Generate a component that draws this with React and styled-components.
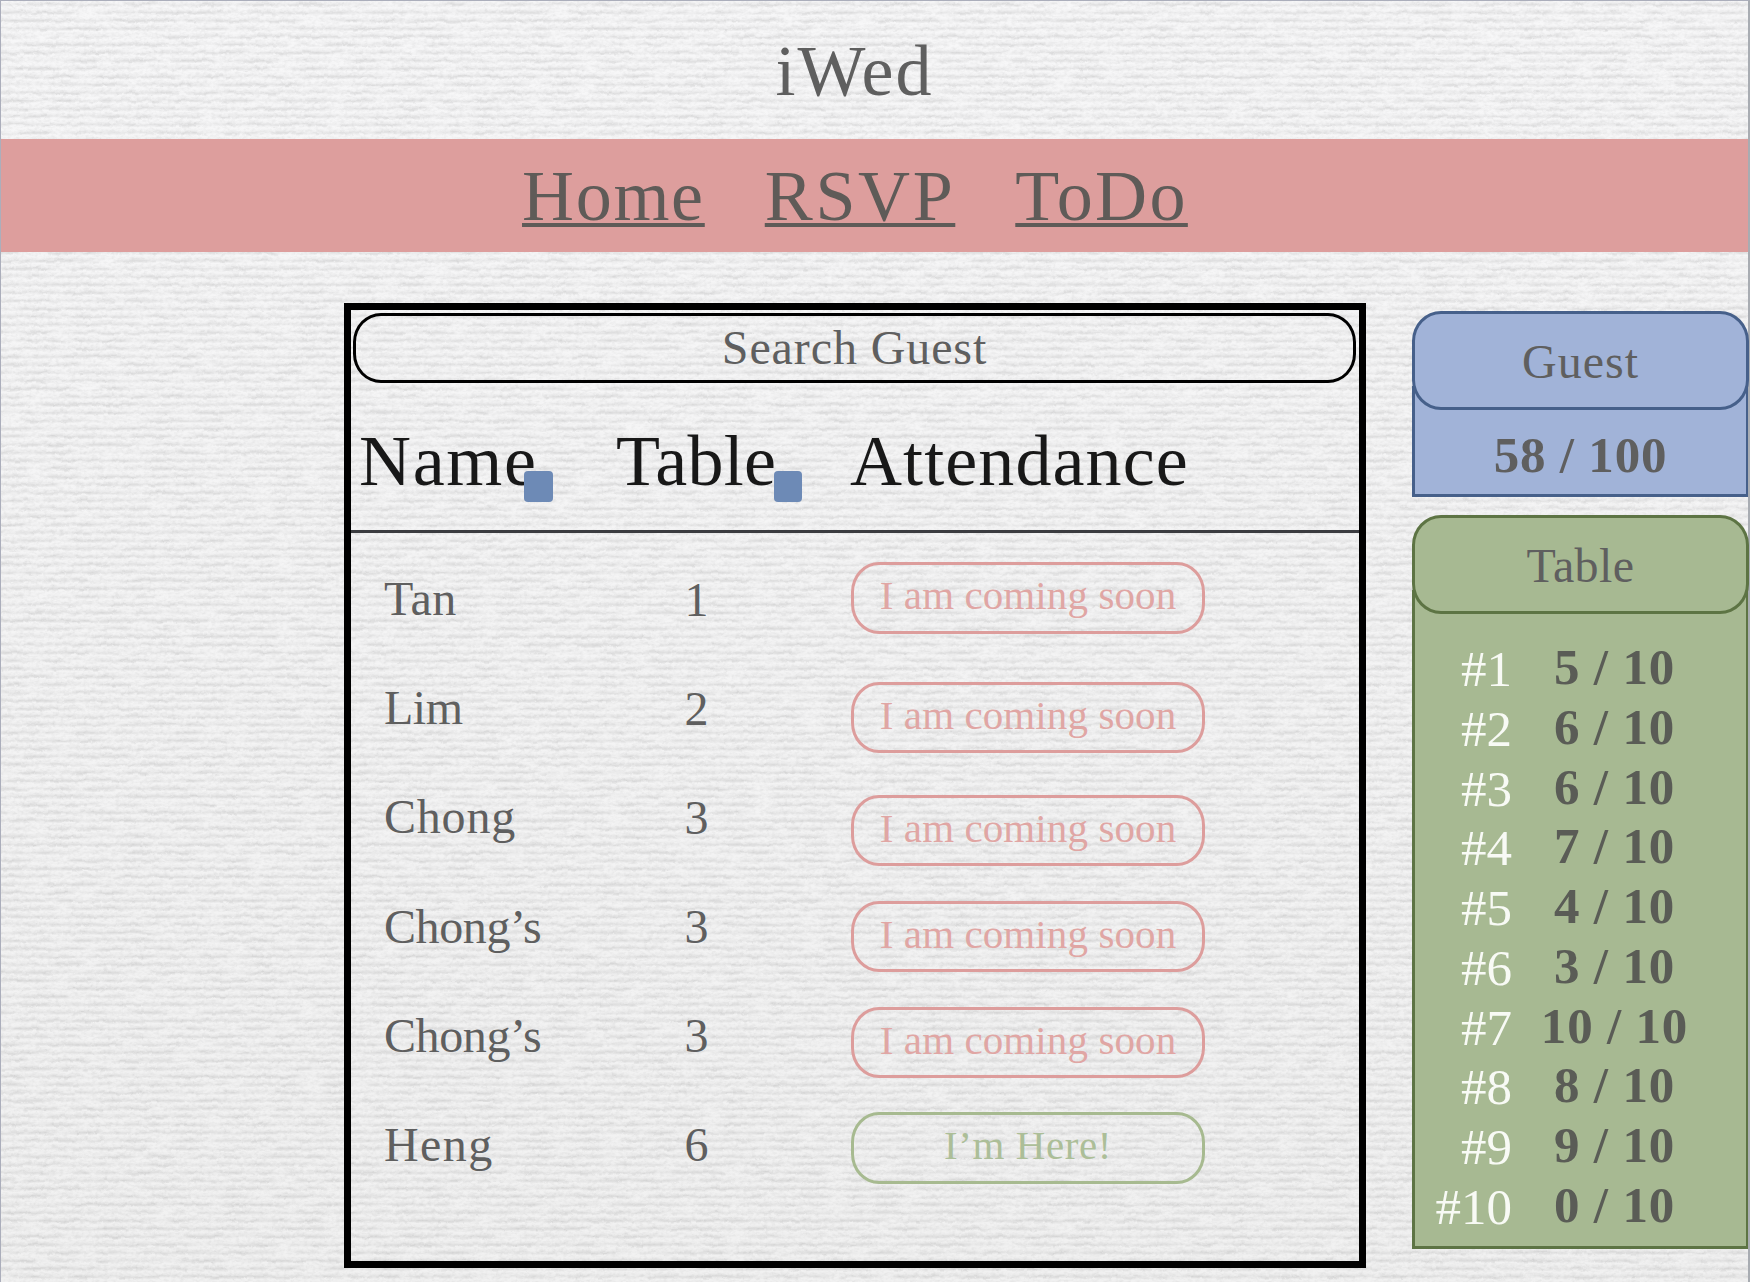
import React from "react";
import styled, { createGlobalStyle } from "styled-components";

const GlobalStyle = createGlobalStyle`
  *, *::before, *::after { box-sizing: border-box; }
  body { margin: 0; background: #f1f1f1; overflow: hidden; }
`;

const Page = styled.div`
  position: relative;
  width: 1750px;
  height: 1282px;
  overflow: hidden;
  font-family: "Liberation Serif", "Times New Roman", serif;
  color: #5f5f5f;
  background: linear-gradient(#f7f7f8, #f1f1f1);
`;

const PaperLayer = styled.svg`
  position: absolute;
  inset: 0;
  width: 100%;
  height: 100%;
`;

const WindowEdge = styled.div`
  position: absolute;
  inset: 0;
  border: 1px solid #abaebb;
  border-right: 2px solid #a8acb2;
  border-bottom: 0;
  pointer-events: none;
`;

const Content = styled.div`
  position: relative;
  display: flex;
  flex-direction: column;
`;

const Text = styled.span`
  display: block;
  white-space: nowrap;
  font-size: ${(p) => p.$size || 48}px;
  line-height: ${(p) => p.$line || p.$size || 48}px;
  letter-spacing: ${(p) => p.$track || 0}px;
  font-weight: ${(p) => (p.$bold ? 700 : 400)};
`;

const Header = styled.header`
  display: flex;
  justify-content: center;
  height: 139px;
  padding: 31px 41px 0 0;
`;

const Nav = styled.nav`
  display: flex;
  gap: 60px;
  height: 113px;
  padding: 17px 0 0 522px;
  background: #dd9e9d;
`;

const NavLink = styled.a`
  color: #5f5b58;
  font-size: 72px;
  line-height: 80px;
  letter-spacing: ${(p) => p.$track}px;
  text-decoration: underline;
  text-decoration-thickness: 4px;
  text-underline-offset: 3px;
  text-decoration-skip-ink: none;
`;

const Main = styled.main`
  display: flex;
  align-items: flex-start;
  gap: 46px;
  padding: 51px 0 0 344px;
`;

const GuestBoard = styled.section`
  width: 1022px;
  height: 965px;
  flex: none;
  border: 7px solid #000;
  padding-top: 3px;
`;

const SearchBox = styled.div`
  display: flex;
  justify-content: center;
  height: 70px;
  margin: 0 3px 0 2px;
  padding-top: 5px;
  border: 3px solid #000;
  border-radius: 28px / 29px;
`;

const Columns = styled.div`
  display: grid;
  grid-template-columns: ${(p) => p.$cols};
`;

const HeadRow = styled(Columns)`
  height: 150px;
  padding: 38px 0 0 8px;
  border-bottom: 3px solid #3b3c40;
  color: #181818;
`;

const HeadCell = styled.div`
  position: relative;
`;

const SortMark = styled.span`
  position: absolute;
  left: ${(p) => p.$left}px;
  top: 50px;
  width: ${(p) => p.$width}px;
  height: 31px;
  border-radius: 4px;
  background: #6d8ab6;
`;

const NameList = styled.div`
  display: flex;
  flex-direction: column;
  gap: 61.2px;
  padding: 42px 0 0 33px;
`;

const TableList = styled(NameList)`
  align-items: center;
  padding: 42.5px 0 0;
`;

const AttendanceList = styled.div`
  display: flex;
  flex-direction: column;
  padding-top: 29px;
`;

const StatusButton = styled.div`
  display: flex;
  justify-content: center;
  width: 354px;
  height: ${(p) => p.$height}px;
  margin-bottom: ${(p) => p.$gap}px;
  padding-top: 7px;
  border: 3px solid ${(p) => (p.$here ? "#a7ba90" : "#dd9d9c")};
  border-radius: 28px / 30px;
  color: ${(p) => (p.$here ? "#acbe98" : "#e0a6a4")};
`;

const Sidebar = styled.aside`
  display: flex;
  flex-direction: column;
  gap: 18px;
  width: 337px;
  flex: none;
  padding-top: 8px;
`;

const Panel = styled.section`
  --line: ${(p) => p.$line};
  --fill: ${(p) => p.$fill};
  display: flex;
  flex-direction: column;
`;

const PanelTitle = styled.div`
  position: relative;
  z-index: 1;
  display: flex;
  justify-content: center;
  height: 99px;
  padding-top: 21px;
  border: 3px solid var(--line);
  border-radius: 29px / 30px;
  background: var(--fill);
`;

const PanelBody = styled.div`
  height: ${(p) => p.$height}px;
  margin-top: -24px;
  padding-top: ${(p) => p.$top}px;
  border: 3px solid var(--line);
  border-top: 0;
  background: var(--fill);
`;

const Total = styled.div`
  display: flex;
  justify-content: center;
`;

const SeatRow = styled.div`
  display: grid;
  grid-template-columns: 97px 205px;
  height: 59.75px;
`;

const SeatNumber = styled.div`
  display: flex;
  justify-content: flex-end;
  padding-top: 2px;
  color: #f8faf5;
`;

const Seats = styled.div`
  display: flex;
  justify-content: center;
  color: #5a5c56;
`;

function Paper() {
  return (
    <PaperLayer aria-hidden="true">
      <defs>
        <linearGradient id="ridge" x1="0" y1="0" x2="0" y2="1">
          <stop offset="0" stopColor="#000" stopOpacity="0" />
          <stop offset="0.25" stopColor="#000" stopOpacity="0.02" />
          <stop offset="0.6" stopColor="#000" stopOpacity="0.095" />
          <stop offset="0.9" stopColor="#000" stopOpacity="0" />
        </linearGradient>
        <pattern id="laid" width="40" height="8" patternUnits="userSpaceOnUse">
          <rect width="40" height="8" fill="url(#ridge)" />
        </pattern>
        <filter id="fibre" x="0" y="0" width="100%" height="100%" colorInterpolationFilters="sRGB">
          <feTurbulence type="fractalNoise" baseFrequency="0.1 0.07" numOctaves="3" seed="4" result="warp" />
          <feDisplacementMap in="SourceGraphic" in2="warp" scale="4" xChannelSelector="R" yChannelSelector="G" result="lines" />
          <feTurbulence type="fractalNoise" baseFrequency="0.04 0.12" numOctaves="3" seed="9" />
          <feColorMatrix values="0 0 0 0 0  0 0 0 0 0  0 0 0 0 0  2.2 0 0 0 -0.4" result="streak" />
          <feComposite in="lines" in2="streak" operator="in" />
        </filter>
        <filter id="grain" x="0" y="0" width="100%" height="100%" colorInterpolationFilters="sRGB">
          <feTurbulence type="fractalNoise" baseFrequency="0.25 0.4" numOctaves="2" seed="2" />
          <feColorMatrix values="0 0 0 0 0.2  0 0 0 0 0.2  0 0 0 0 0.2  0.12 0 0 0 -0.05" />
        </filter>
      </defs>
      <rect width="1750" height="1282" filter="url(#grain)" />
      <rect width="1750" height="1282" fill="url(#laid)" filter="url(#fibre)" />
    </PaperLayer>
  );
}

const guests = [
  { name: "Tan", table: 1, height: 72, gap: 48, track: 0.5 },
  { name: "Lim", table: 2, height: 71, gap: 42, track: -0.5 },
  { name: "Chong", table: 3, height: 71, gap: 35, track: 0.8 },
  { name: "Chong’s", table: 3, height: 71, gap: 35, track: -0.4 },
  { name: "Chong’s", table: 3, height: 71, gap: 34, track: -0.4 },
  { name: "Heng", table: 6, height: 72, gap: 0, here: true, track: 1.4 },
];

const seats = [5, 6, 6, 7, 4, 3, 10, 8, 9, 0];

export default function App() {
  return (
    <>
      <GlobalStyle />
      <Page>
        <Paper />
        <Content>
          <Header>
            <Text $size={72} $line={80} $track={2}>iWed</Text>
          </Header>
          <Nav>
            <NavLink $track={1.7}>Home</NavLink>
            <NavLink $track={2.6}>RSVP</NavLink>
            <NavLink $track={2.4}>ToDo</NavLink>
          </Nav>
          <Main>
            <GuestBoard>
              <SearchBox>
                <Text $size={48} $line={54} $track={0.9}>Search Guest</Text>
              </SearchBox>
              <HeadRow $cols="257px 234px 1fr">
                <HeadCell>
                  <Text $size={72} $line={80} $track={1.7}>Name</Text>
                  <SortMark $left={165} $width={29} />
                </HeadCell>
                <HeadCell>
                  <Text $size={72} $line={80} $track={0.3}>Table</Text>
                  <SortMark $left={158} $width={28} />
                </HeadCell>
                <HeadCell>
                  <Text $size={72} $line={80} $track={1.1}>Attendance</Text>
                </HeadCell>
              </HeadRow>
              <Columns $cols="240px 211px 49px 1fr">
                <NameList>
                  {guests.map((g, i) => (
                    <Text key={i} $track={g.track}>{g.name}</Text>
                  ))}
                </NameList>
                <TableList>
                  {guests.map((g, i) => (
                    <Text key={i}>{g.table}</Text>
                  ))}
                </TableList>
                <div />
                <AttendanceList>
                  {guests.map((g, i) => (
                    <StatusButton key={i} $here={g.here} $height={g.height} $gap={g.gap}>
                      <Text $size={41} $line={46} $track={g.here ? 0.6 : 0.1}>
                        {g.here ? "I’m Here!" : "I am coming soon"}
                      </Text>
                    </StatusButton>
                  ))}
                </AttendanceList>
              </Columns>
            </GuestBoard>
            <Sidebar>
              <Panel $fill="#a1b3d8" $line="#46608a">
                <PanelTitle>
                  <Text $size={48} $line={54} $track={1}>Guest</Text>
                </PanelTitle>
                <PanelBody $height={111} $top={43}>
                  <Total>
                    <Text $size={51} $line={52} $track={0.8} $bold>58 / 100</Text>
                  </Total>
                </PanelBody>
              </Panel>
              <Panel $fill="#a7b992" $line="#5d7444">
                <PanelTitle>
                  <Text $size={48} $line={54} $track={0.4}>Table</Text>
                </PanelTitle>
                <PanelBody $height={659} $top={51}>
                  {seats.map((n, i) => (
                    <SeatRow key={i}>
                      <SeatNumber>
                        <Text $size={51} $line={52}>#{i + 1}</Text>
                      </SeatNumber>
                      <Seats>
                        <Text $size={51} $line={52} $track={0.8} $bold>{n} / 10</Text>
                      </Seats>
                    </SeatRow>
                  ))}
                </PanelBody>
              </Panel>
            </Sidebar>
          </Main>
        </Content>
        <WindowEdge />
      </Page>
    </>
  );
}
